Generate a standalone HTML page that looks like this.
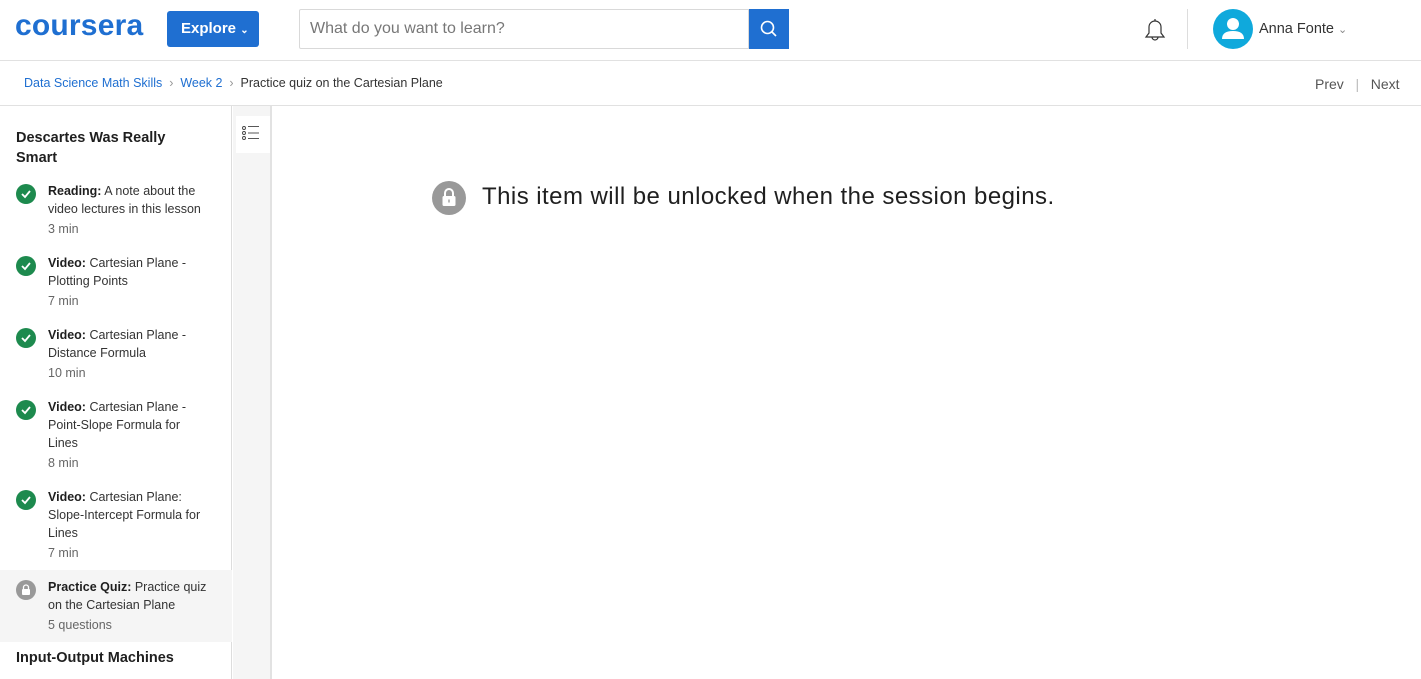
<!DOCTYPE html>
<html><head><meta charset="utf-8"><style>
*{margin:0;padding:0;box-sizing:border-box}
body{width:1421px;height:679px;overflow:hidden;background:#fff;font-family:"Liberation Sans",sans-serif;color:#1f1f1f;position:relative}
.abs{position:absolute}
.hdr{left:0;top:0;width:1421px;height:61px;border-bottom:1px solid #e1e1e1}
.logo{left:15px;top:9px;font-size:30px;font-weight:bold;color:#1f6fd1;letter-spacing:0.2px}
.explore{left:167px;top:11px;width:92px;height:36px;background:#1f6fd1;border-radius:3px;color:#fff;font-weight:bold;font-size:15px;line-height:36px;padding-left:14px}
.search{left:299px;top:9px;width:450px;height:40px;border:1px solid #d9d9d9;border-radius:2px 0 0 2px;font-size:16px;color:#777;line-height:38px;padding-left:10px}
.sbtn{left:749px;top:9px;width:40px;height:40px;background:#1f6fd1}
.bc{left:0;top:61px;width:1421px;height:45px;border-bottom:1px solid #e1e1e1;font-size:12.5px}
.side{left:0;top:106px;width:232px;height:573px;border-right:1px solid #ddd}
.strip{left:233px;top:106px;width:39px;height:573px;background:#f5f5f5;border-right:2px solid #e2e2e2}
.h{font-weight:bold;font-size:14.5px;line-height:20px}
.it{font-size:12.5px;line-height:18px;color:#333}
.it b{color:#1f1f1f}
.it .m{color:#666;margin-top:2px}
.chk{width:20px;height:20px;border-radius:50%;background:#1d8a4e}
</style></head><body>
<div class="abs hdr"></div>
<div class="abs logo">coursera</div>
<div class="abs explore">Explore <span style="font-size:10px">&#8964;</span></div>
<div class="abs search">What do you want to learn?</div>
<div class="abs sbtn"><svg width="40" height="40"><circle cx="18.5" cy="18.5" r="6" fill="none" stroke="#fff" stroke-width="1.6"/><line x1="23" y1="23" x2="27" y2="27" stroke="#fff" stroke-width="1.6"/></svg></div>
<svg class="abs" style="left:1142px;top:16px" width="26" height="28"><path d="M4 21 H22 L19 17 V11 A6 6 0 0 0 7 11 V17 Z" fill="none" stroke="#333" stroke-width="1.2"/><path d="M10 21 A3 3 0 0 0 16 21" fill="none" stroke="#333" stroke-width="1.2"/><line x1="13" y1="3" x2="13" y2="5" stroke="#333" stroke-width="1.2"/></svg>
<div class="abs" style="left:1187px;top:9px;width:1px;height:40px;background:#ddd"></div>
<svg class="abs" style="left:1213px;top:9px" width="40" height="40"><circle cx="20" cy="20" r="20" fill="#0fa9dc"/><circle cx="20" cy="15" r="6" fill="#fff"/><path d="M9 30 Q9 22 20 22 Q31 22 31 30 Z" fill="#fff"/></svg>
<div class="abs" style="left:1259px;top:21px;font-size:14.5px;color:#333">Anna Fonte <span style="color:#888;font-size:11px">&#8964;</span></div>
<div class="abs bc"></div>
<div class="abs" style="left:24px;top:76px;font-size:12.5px;color:#1f6fd1">Data Science Math Skills <span style="color:#999">&nbsp;›&nbsp;</span> Week 2 <span style="color:#999">&nbsp;›&nbsp;</span> <span style="color:#333">Practice quiz on the Cartesian Plane</span></div>
<div class="abs" style="left:1315px;top:76px;font-size:14px;color:#555">Prev &nbsp;&nbsp;<span style="color:#bbb">|</span>&nbsp;&nbsp; Next</div>
<div class="abs side"></div>
<div class="abs strip"></div>
<div class="abs" style="left:236px;top:116px;width:34px;height:37px;background:#fff"></div>
<svg class="abs" style="left:241px;top:125px" width="20" height="18"><g fill="none" stroke="#444" stroke-width="0.9"><circle cx="3" cy="3" r="1.5"/><circle cx="3" cy="8" r="1.5"/><circle cx="3" cy="13" r="1.5"/><line x1="7" y1="1.5" x2="18" y2="1.5"/><line x1="7" y1="8" x2="18" y2="8"/><line x1="7" y1="13.5" x2="18" y2="13.5"/></g></svg>
<div class="abs h" style="left:16px;top:128px;width:165px">Descartes Was Really Smart</div>

<div class="abs chk" style="left:16px;top:184px"><svg width="20" height="20"><path d="M6 10 L9 13 L14 7" fill="none" stroke="#fff" stroke-width="1.8"/></svg></div>
<div class="abs it" style="left:48px;top:182px;width:170px"><b>Reading:</b> A note about the video lectures in this lesson<div class="m">3 min</div></div>
<div class="abs chk" style="left:16px;top:256px"><svg width="20" height="20"><path d="M6 10 L9 13 L14 7" fill="none" stroke="#fff" stroke-width="1.8"/></svg></div>
<div class="abs it" style="left:48px;top:254px;width:170px"><b>Video:</b> Cartesian Plane - Plotting Points<div class="m">7 min</div></div>
<div class="abs chk" style="left:16px;top:328px"><svg width="20" height="20"><path d="M6 10 L9 13 L14 7" fill="none" stroke="#fff" stroke-width="1.8"/></svg></div>
<div class="abs it" style="left:48px;top:326px;width:170px"><b>Video:</b> Cartesian Plane - Distance Formula<div class="m">10 min</div></div>
<div class="abs chk" style="left:16px;top:400px"><svg width="20" height="20"><path d="M6 10 L9 13 L14 7" fill="none" stroke="#fff" stroke-width="1.8"/></svg></div>
<div class="abs it" style="left:48px;top:398px;width:150px"><b>Video:</b> Cartesian Plane - Point-Slope Formula for Lines<div class="m">8 min</div></div>
<div class="abs chk" style="left:16px;top:490px"><svg width="20" height="20"><path d="M6 10 L9 13 L14 7" fill="none" stroke="#fff" stroke-width="1.8"/></svg></div>
<div class="abs it" style="left:48px;top:488px;width:170px"><b>Video:</b> Cartesian Plane: Slope-Intercept Formula for Lines<div class="m">7 min</div></div>
<div class="abs" style="left:0;top:570px;width:232px;height:72px;background:#f5f5f5"></div>
<svg class="abs" style="left:16px;top:580px" width="20" height="20"><circle cx="10" cy="10" r="10" fill="#999"/><rect x="6" y="9" width="8" height="6" rx="1" fill="#fff"/><path d="M7.5 9 V7.5 A2.5 2.5 0 0 1 12.5 7.5 V9" fill="none" stroke="#fff" stroke-width="1.3"/></svg>
<div class="abs it" style="left:48px;top:578px;width:170px"><b>Practice Quiz:</b> Practice quiz on the Cartesian Plane<div class="m">5 questions</div></div>
<div class="abs h" style="left:16px;top:648px">Input-Output Machines</div>

<svg class="abs" style="left:432px;top:181px" width="34" height="34"><circle cx="17" cy="17" r="17" fill="#999"/><rect x="10.5" y="15" width="13" height="10" rx="1.5" fill="#fff"/><path d="M13 15 V12 A4 4 0 0 1 21 12 V15" fill="none" stroke="#fff" stroke-width="2"/><rect x="16.3" y="18.5" width="1.4" height="3" fill="#999"/></svg>
<div class="abs" style="left:482px;top:183px;font-size:24px;color:#1f1f1f;letter-spacing:0.45px">This item will be unlocked when the session begins.</div>
</body></html>
